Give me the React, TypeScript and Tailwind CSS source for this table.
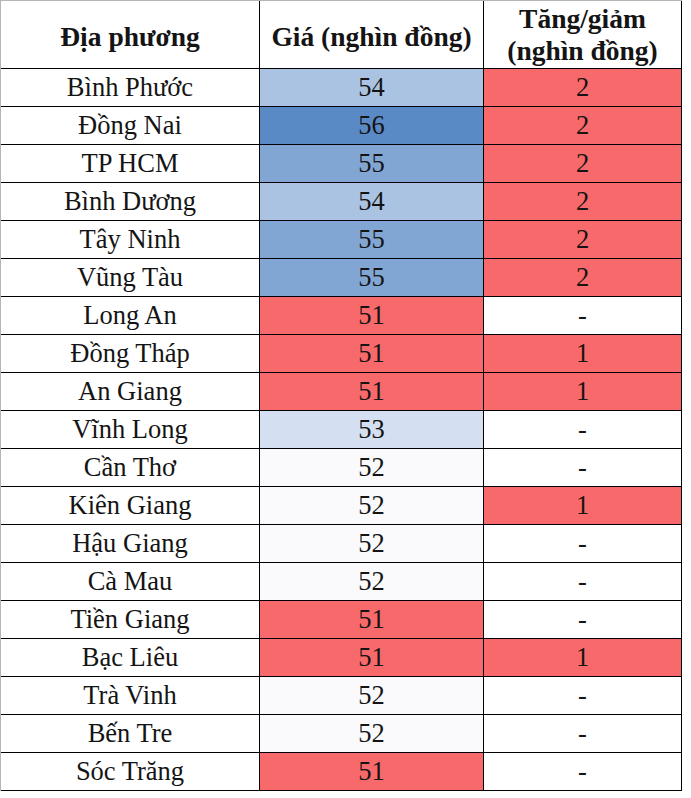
import React from "react";

type Row = { name: string; price: number; change: string };

const rows: Row[] = [
  { name: "Bình Phước", price: 54, change: "2" },
  { name: "Đồng Nai", price: 56, change: "2" },
  { name: "TP HCM", price: 55, change: "2" },
  { name: "Bình Dương", price: 54, change: "2" },
  { name: "Tây Ninh", price: 55, change: "2" },
  { name: "Vũng Tàu", price: 55, change: "2" },
  { name: "Long An", price: 51, change: "-" },
  { name: "Đồng Tháp", price: 51, change: "1" },
  { name: "An Giang", price: 51, change: "1" },
  { name: "Vĩnh Long", price: 53, change: "-" },
  { name: "Cần Thơ", price: 52, change: "-" },
  { name: "Kiên Giang", price: 52, change: "1" },
  { name: "Hậu Giang", price: 52, change: "-" },
  { name: "Cà Mau", price: 52, change: "-" },
  { name: "Tiền Giang", price: 51, change: "-" },
  { name: "Bạc Liêu", price: 51, change: "1" },
  { name: "Trà Vinh", price: 52, change: "-" },
  { name: "Bến Tre", price: 52, change: "-" },
  { name: "Sóc Trăng", price: 51, change: "-" },
];

const priceBg: Record<number, string> = {
  51: "bg-[#f8696b]",
  52: "bg-[#fafafd]",
  53: "bg-[#d4e0f1]",
  54: "bg-[#abc3e2]",
  55: "bg-[#82a6d4]",
  56: "bg-[#5a8ac6]",
};

export default function App() {
  return (
    <div className="w-[691px] h-[798px] bg-white text-[#141414] font-['Liberation_Serif','Times_New_Roman',serif]">
      <div className="w-[682px] border-l border-t border-[#b5b5b5] grid grid-cols-[259px_224px_198px]">
        <div className="h-[68px] pt-[4px] border-r border-b border-black flex items-center justify-center font-bold text-[27.5px]">
          Địa phương
        </div>
        <div className="h-[68px] pt-[4px] border-r border-b border-black flex items-center justify-center font-bold text-[27.5px]">
          Giá (nghìn đồng)
        </div>
        <div className="h-[68px] border-r border-b border-black flex flex-col items-center justify-center font-bold text-[27.5px] leading-[32px]">
          <span>Tăng/giảm</span>
          <span>(nghìn đồng)</span>
        </div>
        {rows.map((r) => (
          <React.Fragment key={r.name}>
            <div className="h-[38px] border-r border-b border-black flex items-center justify-center text-[26.5px]">
              {r.name}
            </div>
            <div
              className={`h-[38px] border-r border-b border-black flex items-center justify-center text-[26.5px] ${priceBg[r.price]}`}
            >
              {r.price}
            </div>
            <div
              className={`h-[38px] border-r border-b border-black flex items-center justify-center text-[26.5px] ${
                r.change === "-" ? "bg-white" : "bg-[#f8696b]"
              }`}
            >
              {r.change}
            </div>
          </React.Fragment>
        ))}
      </div>
    </div>
  );
}
